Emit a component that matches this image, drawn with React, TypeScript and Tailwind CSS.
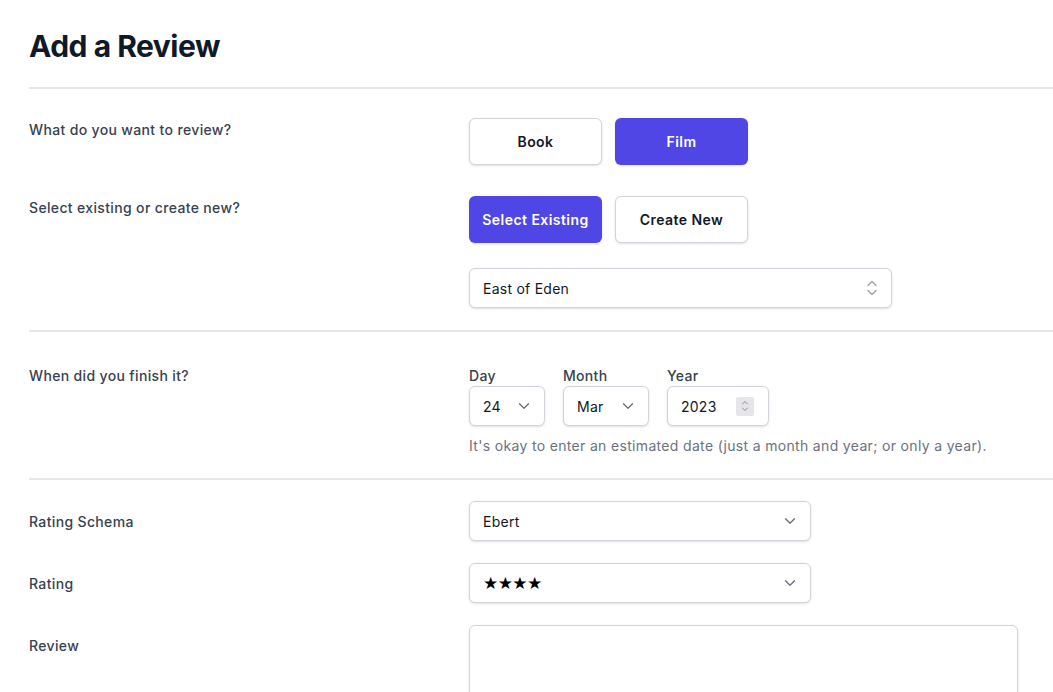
import React from "react";

const Chevron = () => (
  <svg width="12" height="8" viewBox="0 0 12 8" fill="none" className="shrink-0">
    <path d="M1.5 1.75 L6 6.25 L10.5 1.75" stroke="#6b7280" strokeWidth="1.4" strokeLinecap="round" strokeLinejoin="round" />
  </svg>
);

const UpDown = () => (
  <svg width="12" height="18" viewBox="0 0 12 18" fill="none" className="shrink-0">
    <path d="M2 6.5 L6 2.5 L10 6.5" stroke="#9ca3af" strokeWidth="1.4" strokeLinecap="round" strokeLinejoin="round" />
    <path d="M2 11.5 L6 15.5 L10 11.5" stroke="#9ca3af" strokeWidth="1.4" strokeLinecap="round" strokeLinejoin="round" />
  </svg>
);

const Spinner = () => (
  <div className="flex h-[19px] w-[18px] items-center justify-center rounded-[2px] bg-[#e6e6ea]">
    <svg width="10" height="14" viewBox="0 0 10 14" fill="none">
      <path d="M2.5 5 L5 2.5 L7.5 5" stroke="#8b8b93" strokeWidth="1" strokeLinecap="round" strokeLinejoin="round" />
      <path d="M2.5 9 L5 11.5 L7.5 9" stroke="#8b8b93" strokeWidth="1" strokeLinecap="round" strokeLinejoin="round" />
    </svg>
  </div>
);

const Divider = () => <div className="h-[2px] w-full bg-[#e5e7eb]" />;

export default function App() {
  return (
    <div
      className="min-h-[692px] w-full overflow-hidden bg-white pl-[29px] pt-[28px] text-[#111827]"
      style={{ fontFamily: "Inter, 'Noto Sans', sans-serif" }}
    >
      <h1 className="text-[30px] font-bold leading-[36px] tracking-[-0.5px] text-[#111827]">Add a Review</h1>
      <div className="mt-[23px]">
        <Divider />
      </div>

      {/* Section 1 */}
      <div className="pb-[22px] pt-[29px]">
        <div className="flex">
          <div className="w-[440px] shrink-0 pt-[2px] text-sm font-medium leading-5 tracking-[0.35px] text-[#374151]">
            What do you want to review?
          </div>
          <div className="flex gap-[13px]">
            <button className="h-[47px] w-[133px] rounded-md border border-[#d1d5db] bg-white text-sm font-semibold tracking-[0.45px] text-[#111827] shadow-sm">
              Book
            </button>
            <button className="h-[47px] w-[133px] rounded-md bg-[#4f46e5] text-sm font-semibold tracking-[0.45px] text-white shadow-sm">
              Film
            </button>
          </div>
        </div>
        <div className="mt-[31px] flex">
          <div className="w-[440px] shrink-0 pt-[2px] text-sm font-medium leading-5 tracking-[0.35px] text-[#374151]">
            Select existing or create new?
          </div>
          <div className="flex gap-[13px]">
            <button className="h-[47px] w-[133px] rounded-md bg-[#4f46e5] text-sm font-semibold tracking-[0.45px] text-white shadow-sm">
              Select Existing
            </button>
            <button className="h-[47px] w-[133px] rounded-md border border-[#d1d5db] bg-white text-sm font-semibold tracking-[0.45px] text-[#111827] shadow-sm">
              Create New
            </button>
          </div>
        </div>
        <div className="mt-[25px] flex">
          <div className="w-[440px] shrink-0" />
          <div className="flex h-[40px] w-[423px] items-center justify-between rounded-md border border-[#d1d5db] bg-white pl-[13px] pr-[13px] text-[14px] tracking-[0.25px] text-[#111827] shadow-sm">
            <span>East of Eden</span>
            <UpDown />
          </div>
        </div>
      </div>

      <Divider />

      {/* Section 2 */}
      <div className="pb-[22px] pt-[34px]">
        <div className="flex">
          <div className="w-[440px] shrink-0 text-sm font-medium leading-5 tracking-[0.35px] text-[#374151]">When did you finish it?</div>
          <div>
            <div className="flex gap-[18px]">
              <div>
                <div className="text-sm font-medium leading-5 tracking-[0.3px] text-[#374151]">Day</div>
                <div className="flex h-[40px] w-[76px] items-center justify-between rounded-md border border-[#d1d5db] bg-white pl-[13px] pr-[14px] text-[14px] tracking-[0.25px] text-[#111827] shadow-sm">
                  <span>24</span>
                  <Chevron />
                </div>
              </div>
              <div>
                <div className="text-sm font-medium leading-5 tracking-[0.3px] text-[#374151]">Month</div>
                <div className="flex h-[40px] w-[86px] items-center justify-between rounded-md border border-[#d1d5db] bg-white pl-[13px] pr-[14px] text-[14px] tracking-[0.25px] text-[#111827] shadow-sm">
                  <span>Mar</span>
                  <Chevron />
                </div>
              </div>
              <div>
                <div className="text-sm font-medium leading-5 tracking-[0.3px] text-[#374151]">Year</div>
                <div className="flex h-[40px] w-[102px] items-center justify-between rounded-md border border-[#d1d5db] bg-white pl-[13px] pr-[14px] text-[14px] tracking-[0.25px] text-[#111827] shadow-sm">
                  <span>2023</span>
                  <Spinner />
                </div>
              </div>
            </div>
            <p className="mt-[10px] text-sm leading-5 tracking-[0.33px] text-[#6b7280]">
              It's okay to enter an estimated date (just a month and year; or only a year).
            </p>
          </div>
        </div>
      </div>

      <Divider />

      {/* Section 3 */}
      <div className="pt-[21px]">
        <div className="flex">
          <div className="w-[440px] shrink-0 pt-[11px] text-sm font-medium leading-5 tracking-[0.35px] text-[#374151]">Rating Schema</div>
          <div className="flex h-[40px] w-[342px] items-center justify-between rounded-md border border-[#d1d5db] bg-white pl-[13px] pr-[14px] text-[14px] tracking-[0.25px] text-[#111827] shadow-sm">
            <span>Ebert</span>
            <Chevron />
          </div>
        </div>
        <div className="mt-[22px] flex">
          <div className="w-[440px] shrink-0 pt-[11px] text-sm font-medium leading-5 tracking-[0.35px] text-[#374151]">Rating</div>
          <div className="flex h-[40px] w-[342px] items-center justify-between rounded-md border border-[#d1d5db] bg-white pl-[13px] pr-[14px] text-black shadow-sm">
            <span style={{ fontFamily: "'DejaVu Sans', sans-serif" }} className="text-[17px] leading-none tracking-[-0.6px]">★★★★</span>
            <Chevron />
          </div>
        </div>
        <div className="mt-[22px] flex">
          <div className="w-[440px] shrink-0 pt-[11px] text-sm font-medium leading-5 tracking-[0.35px] text-[#374151]">Review</div>
          <div className="h-[120px] w-[549px] rounded-md border border-[#d1d5db] bg-white shadow-sm" />
        </div>
      </div>
    </div>
  );
}
